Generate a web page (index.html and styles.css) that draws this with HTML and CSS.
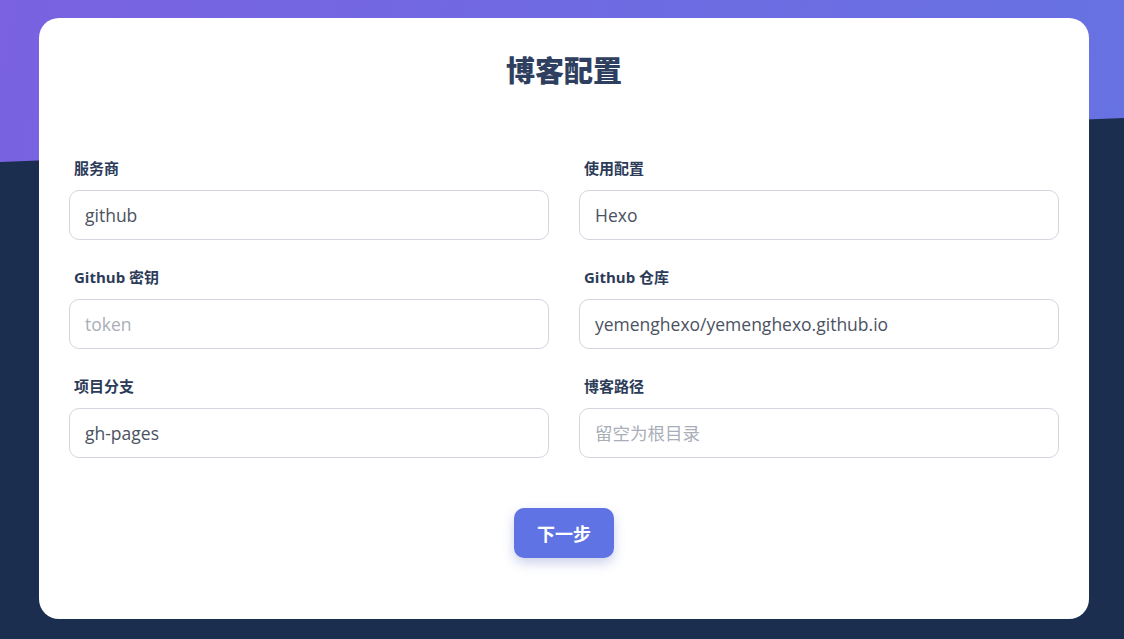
FILE: index.html
```html
<!DOCTYPE html>
<html lang="zh-CN">
<head>
<meta charset="utf-8">
<title>博客配置</title>
<link rel="stylesheet" href="styles.css">
</head>
<body>
<div class="page">
  <div class="card">
    <h1 class="title">博客配置</h1>
    <form class="form">
      <div class="field">
        <label class="label">服务商</label>
        <input class="input" type="text" value="github">
      </div>
      <div class="field">
        <label class="label">使用配置</label>
        <input class="input" type="text" value="Hexo">
      </div>
      <div class="field">
        <label class="label">Github 密钥</label>
        <input class="input" type="text" placeholder="token">
      </div>
      <div class="field">
        <label class="label">Github 仓库</label>
        <input class="input" type="text" value="yemenghexo/yemenghexo.github.io">
      </div>
      <div class="field">
        <label class="label">项目分支</label>
        <input class="input" type="text" value="gh-pages">
      </div>
      <div class="field">
        <label class="label">博客路径</label>
        <input class="input" type="text" placeholder="留空为根目录">
      </div>
    </form>
    <div class="actions">
      <button class="btn" type="button">下一步</button>
    </div>
  </div>
</div>
</body>
</html>
```
FILE: styles.css
```css
* { box-sizing: border-box; }
html, body { margin: 0; height: 100%; }
body {
  background: #1c2e4f;
  font-family: "Open Sans", "Noto Sans CJK SC", sans-serif;
  overflow: hidden;
}
.page {
  position: relative;
  min-height: 100%;
  padding: 18px 35px 20px 39px;
}
.page::before {
  content: "";
  position: absolute;
  left: 0; top: 0; right: 0;
  height: 162px;
  background: linear-gradient(100deg, #7a62e0 0%, #6e6be1 55%, #6772e2 100%);
  clip-path: polygon(0 0, 100% 0, 100% 118px, 0 162px);
  z-index: 0;
}
.card {
  position: relative;
  z-index: 1;
  width: 1050px;
  height: 601px;
  background: #fff;
  border-radius: 20px;
  padding: 30px 30px 0;
}
.title {
  margin: 0;
  text-align: center;
  font-size: 29px;
  line-height: 42px;
  font-weight: 900;
  color: #2f3f5f;
  font-family: "Noto Sans CJK SC", sans-serif;
}
.form {
  margin-top: 68px;
  display: grid;
  grid-template-columns: 1fr 1fr;
  column-gap: 30px;
  row-gap: 27px;
}
.field {
  display: flex;
  flex-direction: column;
  gap: 12px;
}
.label {
  padding-left: 5px;
  font-size: 15px;
  line-height: 20px;
  font-weight: 700;
  color: #2c3b58;
}
.input {
  height: 50px;
  width: 100%;
  border: 1px solid #d3d6dd;
  border-radius: 10px;
  padding: 0 15px;
  font-family: "Open Sans", "Noto Sans CJK SC", sans-serif;
  font-size: 17.5px;
  color: #4b5262;
  background: #fff;
  outline: none;
}
.input::placeholder { color: #a9aeb8; }
.actions {
  margin-top: 50px;
  display: flex;
  justify-content: center;
}
.btn {
  width: 100px;
  height: 50px;
  border: 0;
  border-radius: 10px;
  background: #5f73e4;
  color: #fff;
  font-family: "Noto Sans CJK SC", sans-serif;
  font-size: 18px;
  font-weight: 700;
  box-shadow: 0 5px 12px rgba(70, 85, 180, 0.28);
  cursor: pointer;
}
```
